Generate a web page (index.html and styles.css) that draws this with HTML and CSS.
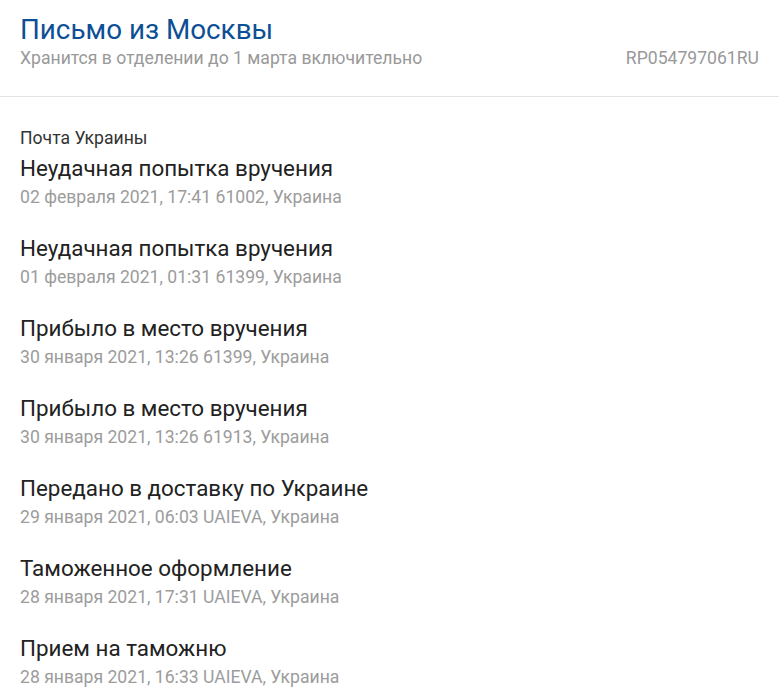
FILE: index.html
```html
<!DOCTYPE html>
<html lang="ru">
<head>
<meta charset="utf-8">
<link rel="stylesheet" href="styles.css">
</head>
<body>
<header class="head">
  <h1 class="title">Письмо из Москвы</h1>
  <div class="sub-row">
    <span class="sub">Хранится в отделении до 1 марта включительно</span>
    <span class="track">RP054797061RU</span>
  </div>
</header>
<section class="events">
  <div class="carrier">Почта Украины</div>
  <div class="list">
    <div class="event">
      <div class="ev-title">Неудачная попытка вручения</div>
      <div class="ev-meta">02 февраля 2021, 17:41 61002, Украина</div>
    </div>
    <div class="event">
      <div class="ev-title">Неудачная попытка вручения</div>
      <div class="ev-meta">01 февраля 2021, 01:31 61399, Украина</div>
    </div>
    <div class="event">
      <div class="ev-title">Прибыло в место вручения</div>
      <div class="ev-meta">30 января 2021, 13:26 61399, Украина</div>
    </div>
    <div class="event">
      <div class="ev-title">Прибыло в место вручения</div>
      <div class="ev-meta">30 января 2021, 13:26 61913, Украина</div>
    </div>
    <div class="event">
      <div class="ev-title">Передано в доставку по Украине</div>
      <div class="ev-meta">29 января 2021, 06:03 UAIEVA, Украина</div>
    </div>
    <div class="event">
      <div class="ev-title">Таможенное оформление</div>
      <div class="ev-meta">28 января 2021, 17:31 UAIEVA, Украина</div>
    </div>
    <div class="event">
      <div class="ev-title">Прием на таможню</div>
      <div class="ev-meta">28 января 2021, 16:33 UAIEVA, Украина</div>
    </div>
  </div>
</section>
</body>
</html>
```
FILE: styles.css
```css
html, body {
  margin: 0;
  padding: 0;
  background: #fff;
  font-family: Roboto, "Noto Sans", sans-serif;
}
.head {
  padding: 13px 20px 0 20px;
  height: 83px;
  border-bottom: 1px solid #e3e3e3;
}
.title {
  margin: 0;
  font-size: 27.8px;
  font-weight: 400;
  line-height: 34px;
  color: #0d4f95;
}
.sub-row {
  display: flex;
  justify-content: space-between;
  font-size: 17.6px;
  line-height: 22px;
  color: #999;
}
.events {
  padding: 30px 20px 0 20px;
}
.carrier {
  font-size: 17.6px;
  line-height: 22px;
  color: #333;
  margin-bottom: 4px;
}
.list {
  display: flex;
  flex-direction: column;
  gap: 21px;
}
.ev-title {
  font-size: 22.4px;
  line-height: 30px;
  color: #222;
}
.ev-meta {
  font-size: 17.6px;
  line-height: 29px;
  font-weight: 400;
  color: #9c9c9c;
}
```
